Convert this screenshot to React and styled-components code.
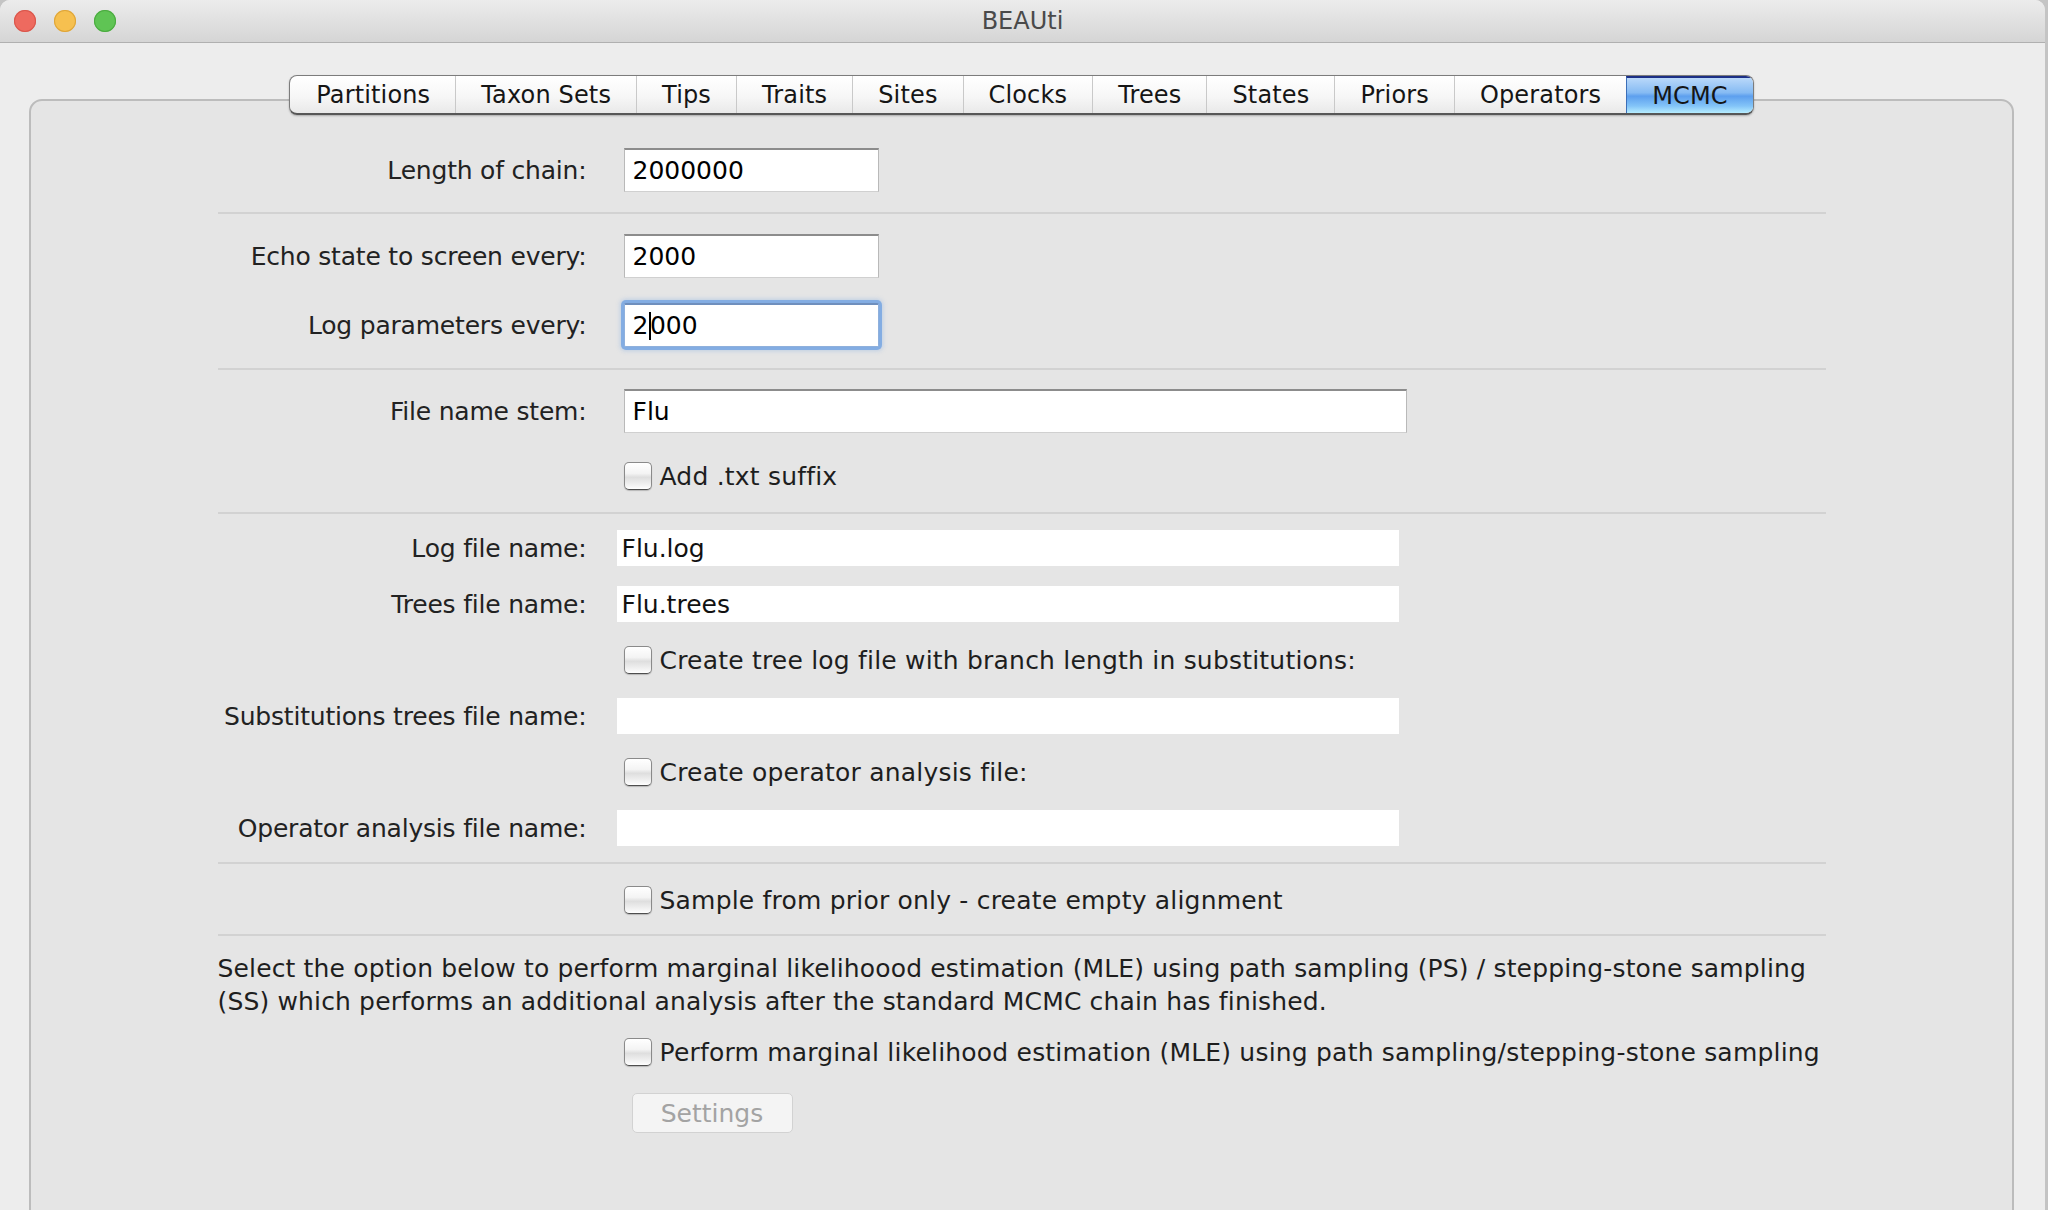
import styled, { createGlobalStyle } from "styled-components";

const GlobalStyle = createGlobalStyle`
  html, body {
    margin: 0;
    padding: 0;
    background: #c4c4c4;
    overflow: hidden;
  }
  body {
    font-family: "DejaVu Sans", "Liberation Sans", sans-serif;
  }
`;

const Window = styled.div`
  width: 2045px;
  height: 1210px;
  background: #ededed;
  border-top-left-radius: 10px;
  border-top-right-radius: 10px;
  overflow: hidden;
  display: flex;
  flex-direction: column;
`;

const TitleBar = styled.div`
  height: 42px;
  flex-shrink: 0;
  border-bottom: 1px solid #b0b0b0;
  background: linear-gradient(#ececec, #d5d5d5);
  display: flex;
  align-items: center;
  position: relative;
`;

const Lights = styled.div`
  display: flex;
  gap: 18px;
  padding-left: 14px;
`;

const Light = styled.span`
  width: 22px;
  height: 22px;
  border-radius: 50%;
  background: ${(p) => p.$color};
  box-shadow: inset 0 0 0 1px ${(p) => p.$edge};
`;

const Title = styled.div`
  position: absolute;
  left: 0;
  right: 0;
  text-align: center;
  font-size: 24px;
  color: #4a4a4a;
  pointer-events: none;
`;

const Body = styled.div`
  flex: 1;
  display: flex;
  flex-direction: column;
  padding: 32px 31px 0 29px;
`;

const TabRow = styled.div`
  display: flex;
  justify-content: center;
  position: relative;
  z-index: 1;
`;

const Tabs = styled.div`
  display: flex;
  height: 37px;
  border: 1px solid #7c7c7c;
  border-bottom: 2px solid #575757;
  border-radius: 8px;
  overflow: hidden;
  background: linear-gradient(#ffffff, #f7f7f7 55%, #e9e9e9);
  box-shadow: 0 1px 2px rgba(0, 0, 0, 0.25);
`;

const Tab = styled.div`
  padding: 0 25px;
  display: flex;
  align-items: center;
  font-size: 24px;
  letter-spacing: 0.15px;
  color: #151515;
  border-left: 1px solid ${(p) => (p.$first ? "transparent" : "#c9c9c9")};
  ${(p) =>
    p.$active &&
    `
    border-left-color: #3c6fb8;
    border-top: 2px solid #1c2f86;
    background: linear-gradient(#b9d8fa 0%, #86bbf3 42%, #5d9fee 52%, #83c4f8 80%, #b6edff 100%);
  `}
`;

const Panel = styled.div`
  margin-top: -16px;
  min-height: 1200px;
  background: #e5e5e5;
  border: 2px solid #bcbcbc;
  border-radius: 13px;
  padding-top: 41px;
`;

const Content = styled.div`
  width: 1608px;
  margin: 0 auto;
  display: flex;
  flex-direction: column;
`;

const Row = styled.div`
  height: 56px;
  margin-top: ${(p) => p.$mt || 0}px;
  display: flex;
  align-items: center;
`;

const Label = styled.div`
  width: 369px;
  flex-shrink: 0;
  margin-right: 30px;
  text-align: right;
  font-size: 25px;
  letter-spacing: -0.2px;
  color: #222;
  white-space: nowrap;
`;

const Separator = styled.div`
  height: 2px;
  margin-top: ${(p) => p.$mt || 0}px;
  background: #d2d2d2;
`;

const TextField = styled.div`
  box-sizing: border-box;
  margin-left: 7px;
  width: ${(p) => p.$w}px;
  height: 44px;
  background: #fff;
  border: 1px solid #b9b9b9;
  border-top: 2px solid #8c8c8c;
  border-bottom-color: #d0d0d0;
  padding-left: 8px;
  display: flex;
  align-items: center;
  font-size: 25px;
  color: #000;
  white-space: pre;
  ${(p) =>
    p.$focused &&
    `
    border: 1px solid #8fb0dc;
    border-top: 2px solid #6f8fbd;
    border-radius: 2px;
    box-shadow: 0 0 0 3px rgba(110, 160, 225, 0.75), 0 0 4px 4px rgba(120, 165, 225, 0.35);
  `}
`;

const FlatField = styled.div`
  box-sizing: border-box;
  width: 782px;
  height: 36px;
  background: #fff;
  padding-left: 5px;
  display: flex;
  align-items: center;
  font-size: 25px;
  color: #111;
`;

const Caret = styled.span`
  display: inline-block;
  width: 1.5px;
  height: 28px;
  background: #000;
  margin: 0 -1px 0 1px;
`;

const Check = styled.label`
  display: flex;
  align-items: center;
  gap: 8px;
  margin-left: 7px;
  font-size: 25px;
  letter-spacing: 0.2px;
  color: #1e1e1e;
  white-space: nowrap;
`;

const Box = styled.span`
  box-sizing: border-box;
  width: 28px;
  height: 28px;
  border-radius: 5px;
  border: 1.5px solid #8a8a8a;
  border-bottom-color: #4e4e4e;
  background: linear-gradient(#ffffff, #f4f4f4 40%, #dedede 55%, #f6f6f6 90%, #ffffff);
  box-shadow: 0 1px 1px rgba(0, 0, 0, 0.2);
`;

const Paragraph = styled.p`
  margin: 16px 0 0;
  font-size: 25px;
  letter-spacing: 0.15px;
  line-height: 33px;
  color: #1e1e1e;
  white-space: nowrap;
`;

const Button = styled.button`
  margin-left: 15px;
  width: 161px;
  height: 40px;
  background: #f4f4f4;
  border: 1.5px solid #d2d2d2;
  border-radius: 5px;
  font-family: inherit;
  font-size: 25px;
  color: #a3a3a3;
  padding: 0;
`;

const tabs = ["Partitions", "Taxon Sets", "Tips", "Traits", "Sites", "Clocks", "Trees", "States", "Priors", "Operators", "MCMC"];

function Checkbox({ children }) {
  return (
    <Check>
      <Box />
      {children}
    </Check>
  );
}

export default function App() {
  return (
    <>
      <GlobalStyle />
      <Window>
        <TitleBar>
          <Lights>
            <Light $color="#ee6a5f" $edge="#d9574c" />
            <Light $color="#f6c04f" $edge="#dea53a" />
            <Light $color="#5fc454" $edge="#4bab40" />
          </Lights>
          <Title>BEAUti</Title>
        </TitleBar>
        <Body>
          <TabRow>
            <Tabs>
              {tabs.map((t, i) => (
                <Tab key={t} $first={i === 0} $active={t === "MCMC"}>
                  {t}
                </Tab>
              ))}
            </Tabs>
          </TabRow>
          <Panel>
            <Content>
              <Row>
                <Label>Length of chain:</Label>
                <TextField $w={255}>2000000</TextField>
              </Row>
              <Separator $mt={14} />
              <Row $mt={14}>
                <Label>Echo state to screen every:</Label>
                <TextField $w={255}>2000</TextField>
              </Row>
              <Row $mt={13}>
                <Label>Log parameters every:</Label>
                <TextField $w={255} $focused>
                  2<Caret />000
                </TextField>
              </Row>
              <Separator $mt={15} />
              <Row $mt={13}>
                <Label>File name stem:</Label>
                <TextField $w={783}>Flu</TextField>
              </Row>
              <Row $mt={9}>
                <Label />
                <Checkbox>Add .txt suffix</Checkbox>
              </Row>
              <Separator $mt={8} />
              <Row $mt={6}>
                <Label>Log file name:</Label>
                <FlatField>Flu.log</FlatField>
              </Row>
              <Row>
                <Label>Trees file name:</Label>
                <FlatField>Flu.trees</FlatField>
              </Row>
              <Row>
                <Label />
                <Checkbox>Create tree log file with branch length in substitutions:</Checkbox>
              </Row>
              <Row>
                <Label>Substitutions trees file name:</Label>
                <FlatField />
              </Row>
              <Row>
                <Label />
                <Checkbox>Create operator analysis file:</Checkbox>
              </Row>
              <Row>
                <Label>Operator analysis file name:</Label>
                <FlatField />
              </Row>
              <Separator $mt={6} />
              <Row $mt={8}>
                <Label />
                <Checkbox>Sample from prior only - create empty alignment</Checkbox>
              </Row>
              <Separator $mt={6} />
              <Paragraph>
                Select the option below to perform marginal likelihoood estimation (MLE) using path sampling (PS) / stepping-stone sampling
                <br />
                (SS) which performs an additional analysis after the standard MCMC chain has finished.
              </Paragraph>
              <Row $mt={6}>
                <Label />
                <Checkbox>Perform marginal likelihood estimation (MLE) using path sampling/stepping-stone sampling</Checkbox>
              </Row>
              <Row $mt={5}>
                <Label />
                <Button disabled>Settings</Button>
              </Row>
            </Content>
          </Panel>
        </Body>
      </Window>
    </>
  );
}
